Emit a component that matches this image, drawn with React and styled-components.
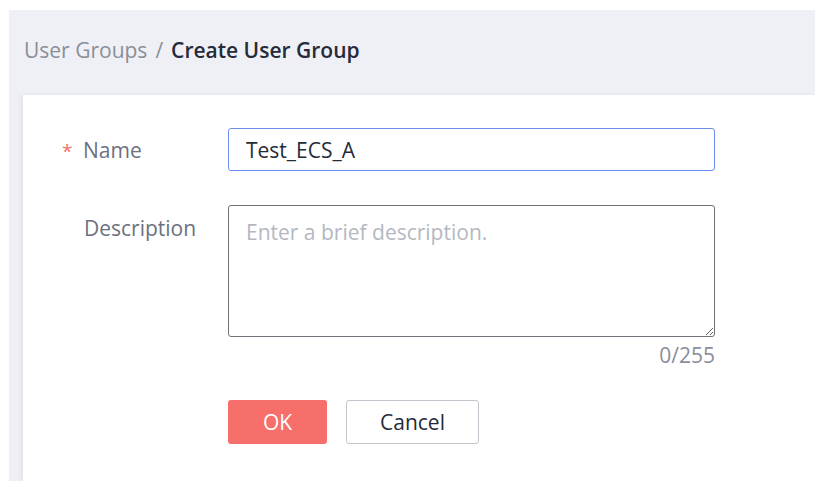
import React from "react";
import styled, { createGlobalStyle } from "styled-components";

const Global = createGlobalStyle`
  html, body { margin: 0; padding: 0; background: #ffffff; }
  body { font-family: "Open Sans", "Noto Sans", sans-serif; }
  * { box-sizing: border-box; }
`;

const Page = styled.div`
  width: 815px;
  height: 481px;
  padding: 10px 0 0 9px;
  overflow: hidden;
`;

const Shell = styled.div`
  height: 100%;
  background: #eff0f5;
  padding-left: 14px;
  display: flex;
  flex-direction: column;
`;

const Breadcrumb = styled.div`
  height: 85px;
  display: flex;
  align-items: center;
  gap: 8px;
  padding-left: 1px;
  padding-bottom: 6px;
  font-size: 21px;
`;

const Crumb = styled.span`
  color: ${(p) => (p.$current ? "#252b3a" : "#8a8e99")};
  font-weight: ${(p) => (p.$current ? 600 : 400)};
`;

const Card = styled.div`
  flex: 1;
  background: #ffffff;
  box-shadow: -2px 0 4px rgba(120, 125, 145, 0.12);
  padding: 33px 0 0 40px;
`;

const Row = styled.div`
  display: grid;
  grid-template-columns: 165px 487px;
  align-items: ${(p) => (p.$top ? "start" : "center")};
  margin-bottom: ${(p) => p.$gap || 0}px;
`;

const Label = styled.label`
  display: flex;
  align-items: center;
  font-size: 21px;
  color: #6c7080;
  padding-top: ${(p) => (p.$top ? "9px" : "0")};
`;

const Star = styled.span`
  width: 21px;
  color: #f66f6a;
  font-size: 19px;
  padding-top: 3px;
  margin-left: -1px;
`;

const Spacer = styled.span`
  width: 21px;
`;

const TextInput = styled.input`
  height: 43px;
  width: 100%;
  border: 1.5px solid #6b8ff0;
  border-radius: 3px;
  padding: 0 17px;
  font: inherit;
  font-size: 21px;
  color: #252b3a;
  outline: none;
`;

const Field = styled.div`
  display: flex;
  flex-direction: column;
  align-items: flex-end;
`;

const TextArea = styled.textarea`
  width: 100%;
  height: 132px;
  border: 1.5px solid #6f727b;
  border-radius: 3px;
  padding: 12px 17px;
  font: inherit;
  font-size: 21px;
  color: #252b3a;
  resize: vertical;
  outline: none;
  &::placeholder { color: #b4b8c2; }
`;

const Counter = styled.div`
  margin-top: 4px;
  font-size: 21px;
  line-height: 28px;
  color: #8a8e99;
`;

const Actions = styled.div`
  display: flex;
  gap: 19px;
  margin-top: 31px;
  margin-left: 165px;
`;

const Button = styled.button`
  height: 44px;
  width: ${(p) => (p.$primary ? "99px" : "133px")};
  border-radius: 3px;
  font: inherit;
  font-size: 21px;
  cursor: pointer;
  background: ${(p) => (p.$primary ? "#f66f6a" : "#ffffff")};
  color: ${(p) => (p.$primary ? "#ffffff" : "#252b3a")};
  border: ${(p) => (p.$primary ? "none" : "1.5px solid #c3c5cc")};
`;

export default function App() {
  return (
    <Page>
      <Global />
      <Shell>
        <Breadcrumb>
          <Crumb>User Groups</Crumb>
          <Crumb>/</Crumb>
          <Crumb $current>Create User Group</Crumb>
        </Breadcrumb>
        <Card>
          <Row $gap={34}>
            <Label>
              <Star>*</Star>Name
            </Label>
            <TextInput defaultValue="Test_ECS_A" />
          </Row>
          <Row $top>
            <Label $top>
              <Spacer />Description
            </Label>
            <Field>
              <TextArea placeholder="Enter a brief description." />
              <Counter>0/255</Counter>
            </Field>
          </Row>
          <Actions>
            <Button $primary>OK</Button>
            <Button>Cancel</Button>
          </Actions>
        </Card>
      </Shell>
    </Page>
  );
}
